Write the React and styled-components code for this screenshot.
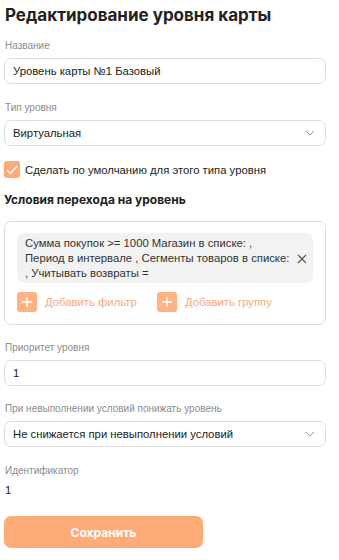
import React from 'react';
import styled, {createGlobalStyle} from 'styled-components';

const GlobalStyle = createGlobalStyle`
    body {
        margin: 0;
        background: #ffffff;
        font-family: "Liberation Sans", Arial, sans-serif;
        color: #222;
    }
`;

const Page = styled.div`
    width: 339px;
    padding: 4px 13px 12px 4px;
    box-sizing: border-box;
    display: flex;
    flex-direction: column;
`;

const Title = styled.h1`
    margin: 0 0 0 1px;
    font-family: "Inter", "Open Sans", sans-serif;
    font-size: 17px;
    font-weight: 700;
    line-height: 22px;
    color: #222;
`;

const Field = styled.div`
    display: flex;
    flex-direction: column;
    margin-top: ${p => p.$top || 12}px;
`;

const Label = styled.div`
    font-size: 10px;
    line-height: 14px;
    color: #8c8c8c;
    margin-bottom: 5px;
    padding-left: 1px;
`;

const Box = styled.div`
    height: 26px;
    border: 1px solid #dedede;
    border-radius: 7px;
    box-sizing: border-box;
    display: flex;
    align-items: center;
    justify-content: space-between;
    padding: 0 10px 0 8px;
    font-size: 11.3px;
    color: #222;
`;

const Chevron = () => (
    <svg width="10" height="6" viewBox="0 0 10 6">
        <path d="M1 1l4 4 4-4" fill="none" stroke="#999" strokeWidth="1" />
    </svg>
);

const CheckRow = styled.label`
    display: flex;
    align-items: center;
    gap: 5px;
    margin-top: 15px;
    font-size: 11.3px;
    color: #222;
`;

const CheckBox = styled.span`
    width: 16px;
    height: 17px;
    border-radius: 3px;
    background: #ffab78;
    display: flex;
    align-items: center;
    justify-content: center;
`;

const SectionTitle = styled.div`
    margin-top: 14px;
    font-family: "Inter", "Open Sans", sans-serif;
    font-size: 12px;
    font-weight: 700;
    color: #222;
`;

const Conditions = styled.div`
    margin-top: 14px;
    border: 1px solid #dedede;
    border-radius: 7px;
    padding: 11px 12px 12px 12px;
    display: flex;
    flex-direction: column;
    gap: 9px;
`;

const Chip = styled.div`
    background: #f2f2f2;
    border-radius: 7px;
    padding: 3px 10px 2px 8px;
    display: flex;
    align-items: center;
    gap: 8px;
    font-size: 11.3px;
    line-height: 15px;
    color: #333;
`;

const ChipText = styled.div`
    flex: 1;
    white-space: nowrap;
`;

const CloseIcon = styled.svg`
    flex-shrink: 0;
`;

const Actions = styled.div`
    display: flex;
    gap: 20px;
`;

const AddButton = styled.div`
    display: flex;
    align-items: center;
    gap: 8px;
    width: 120px;
    white-space: nowrap;
    font-size: 11.3px;
    color: #fba97f;
`;

const PlusSquare = styled.span`
    width: 20px;
    height: 20px;
    border-radius: 3px;
    background: #ffb283;
    display: flex;
    align-items: center;
    justify-content: center;
`;

const Plus = () => (
    <svg width="10" height="10" viewBox="0 0 10 10">
        <path d="M5 0v10M0 5h10" stroke="#fff" strokeWidth="1.4" />
    </svg>
);

const Value = styled.div`
    font-size: 11.3px;
    color: #222;
    padding-left: 1px;
    margin-top: 1px;
`;

const SaveButton = styled.button`
    margin-top: 20px;
    width: 199px;
    height: 32px;
    border: none;
    border-radius: 7px;
    background: #ffab78;
    color: #fff;
    font-family: "Inter", "Open Sans", sans-serif;
    font-size: 12px;
    font-weight: 700;
    cursor: pointer;
`;

function App() {
    return (
        <Page>
            <GlobalStyle />
            <Title>Редактирование уровня карты</Title>

            <Field $top={13}>
                <Label>Название</Label>
                <Box>Уровень карты №1 Базовый</Box>
            </Field>

            <Field $top={17}>
                <Label>Тип уровня</Label>
                <Box>Виртуальная<Chevron /></Box>
            </Field>

            <CheckRow>
                <CheckBox>
                    <svg width="12" height="10" viewBox="0 0 12 10">
                        <path d="M1 5l3.5 3.5L11 1" fill="none" stroke="#fff" strokeWidth="1.4" />
                    </svg>
                </CheckBox>
                Сделать по умолчанию для этого типа уровня
            </CheckRow>

            <SectionTitle>Условия перехода на уровень</SectionTitle>

            <Conditions>
                <Chip>
                    <ChipText>
                        Сумма покупок &gt;= 1000 Магазин в списке: ,<br />
                        Период в интервале , Сегменты товаров в списке:<br />
                        , Учитывать возвраты =
                    </ChipText>
                    <CloseIcon width="10" height="10" viewBox="0 0 10 10">
                        <path d="M1 1l8 8M9 1l-8 8" stroke="#555" strokeWidth="1.1" />
                    </CloseIcon>
                </Chip>
                <Actions>
                    <AddButton><PlusSquare><Plus /></PlusSquare>Добавить фильтр</AddButton>
                    <AddButton><PlusSquare><Plus /></PlusSquare>Добавить группу</AddButton>
                </Actions>
            </Conditions>

            <Field $top={16}>
                <Label>Приоритет уровня</Label>
                <Box>1</Box>
            </Field>

            <Field $top={16}>
                <Label>При невыполнении условий понижать уровень</Label>
                <Box>Не снижается при невыполнении условий<Chevron /></Box>
            </Field>

            <Field $top={17}>
                <Label>Идентификатор</Label>
                <Value>1</Value>
            </Field>

            <SaveButton>Сохранить</SaveButton>
        </Page>
    );
}

export default App;
